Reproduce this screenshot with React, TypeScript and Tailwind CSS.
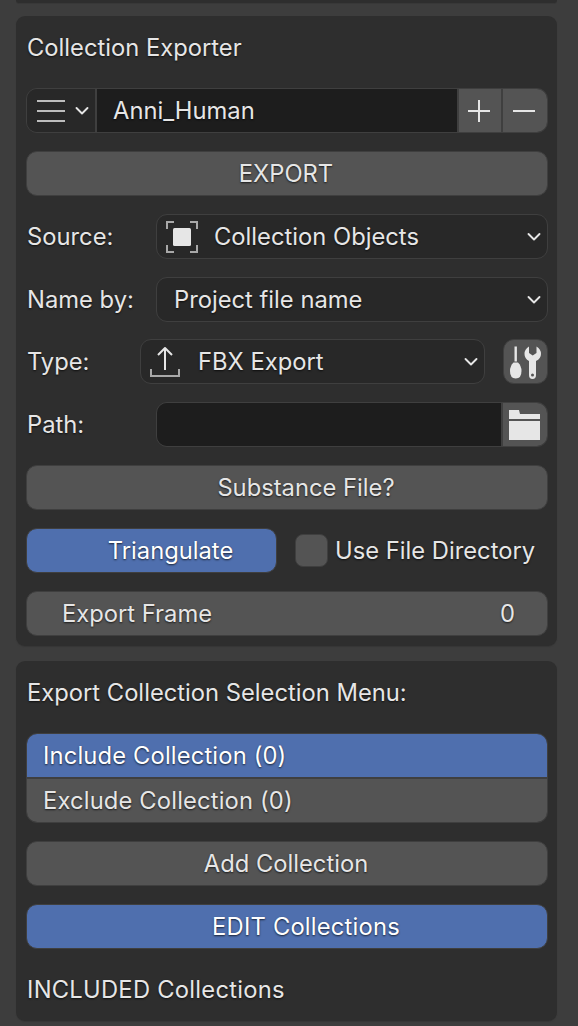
import React from "react";

const shadow = "[text-shadow:0_1px_2px_rgba(0,0,0,0.7)]";
const widgetBorder = "border border-[#3f3f3f]";

function Chevron({ className }: { className?: string }) {
  return (
    <svg viewBox="0 0 16 10" className={className} fill="none" stroke="#e6e6e6" strokeWidth="1.9" strokeLinecap="round" strokeLinejoin="round">
      <path d="M2.5 2 L8 7.5 L13.5 2" />
    </svg>
  );
}

function Label({ children, className = "" }: { children: React.ReactNode; className?: string }) {
  return <div className={`h-[45px] flex items-center pl-px shrink-0 text-[#e6e6e6] ${shadow} ${className}`}>{children}</div>;
}

function Button({ children, blue, iconGap }: { children: React.ReactNode; blue?: boolean; iconGap?: boolean }) {
  return (
    <div className={`h-[45px] rounded-[11px] flex items-center justify-center ${iconGap ? "pl-[38px]" : "pr-[2px]"} ${widgetBorder} ${shadow} ${blue ? "bg-[#4f6fae] text-white" : "bg-[#545454] text-[#e6e6e6]"}`}>
      {children}
    </div>
  );
}

function Dropdown({ icon, text, className = "" }: { icon?: React.ReactNode; text: string; className?: string }) {
  return (
    <div className={`h-[45px] rounded-[11px] bg-[#282828] flex items-center text-[#e6e6e6] ${widgetBorder} ${shadow} ${className}`}>
      {icon}
      <span className={icon ? "" : "pl-[17px]"}>{text}</span>
      <Chevron className="w-[16px] h-[10px] ml-auto mr-[5px]" />
    </div>
  );
}

export default function App() {
  return (
    <div className="w-[578px] h-[1026px] overflow-hidden bg-[#3d3d3d] text-[23.75px] leading-none pl-[16px] pr-[21px] font-['Inter',sans-serif]">
      <div className="h-[3px] bg-[#2e2e2e] rounded-b-[8px] shadow-[0_1px_0_#383838]" />
      <div className="mt-[13px] bg-[#2e2e2e] rounded-[9px] shadow-[0_1px_1px_#363636] pl-[10px] pr-[9px] pt-[9px] pb-[10px] flex flex-col gap-[18px]">
        <Label>Collection Exporter</Label>

        <div className={`h-[45px] rounded-[11px] flex overflow-hidden ${widgetBorder}`}>
          <div className="w-[70px] bg-[#282828] flex items-center pl-[10px] gap-[9px] border-r-2 border-[#3f3f3f] shrink-0">
            <svg viewBox="0 0 28 24" className="w-[28px] h-[24px] shrink-0" stroke="#bdbdbd" strokeWidth="2.2">
              <path d="M0 2 H28 M0 12 H28 M0 22 H28" />
            </svg>
            <Chevron className="w-[16px] h-[10px] shrink-0" />
          </div>
          <div className={`flex-1 bg-[#1d1d1d] flex items-center pl-[16px] text-[#e6e6e6] ${shadow}`}>Anni_Human</div>
          <div className="w-[44px] bg-[#545454] border-l-2 border-[#3f3f3f] flex items-center justify-center shrink-0">
            <svg viewBox="0 0 22 22" className="w-[22px] h-[22px] mr-[2px]" stroke="#e6e6e6" strokeWidth="2">
              <path d="M0 11 H22 M11 0 V22" />
            </svg>
          </div>
          <div className="w-[46px] bg-[#545454] border-l-2 border-[#3f3f3f] flex items-center justify-center shrink-0">
            <svg viewBox="0 0 22 4" className="w-[22px] h-[4px] mr-[2px]" stroke="#e6e6e6" strokeWidth="2">
              <path d="M0 2 H22" />
            </svg>
          </div>
        </div>

        <Button>EXPORT</Button>

        <div className="flex">
          <Label className="w-[130px]">Source:</Label>
          <Dropdown
            className="flex-1"
            text="Collection Objects"
            icon={
              <svg viewBox="0 0 32 32" className="w-[32px] h-[32px] ml-[9px] mr-[16px] shrink-0" fill="none">
                <path d="M1 8 V1 H8 M24 1 H31 V8 M1 24 V31 H8 M24 31 H31 V24" stroke="#a8a8a8" strokeWidth="2" />
                <rect x="7" y="7" width="18" height="18" rx="1.5" fill="#e6e6e6" />
              </svg>
            }
          />
        </div>

        <div className="flex">
          <Label className="w-[130px]">Name by:</Label>
          <Dropdown className="flex-1" text="Project file name" />
        </div>

        <div className="flex -mt-px">
          <Label className="w-[114px]">Type:</Label>
          <Dropdown
            className="flex-1"
            text="FBX Export"
            icon={
              <svg viewBox="0 0 30 32" className="w-[30px] h-[32px] ml-[9px] mr-[18px] shrink-0" fill="none">
                <path d="M15 24 V2 M8 9 L15 2 L22 9" stroke="#e6e6e6" strokeWidth="2" strokeLinejoin="round" />
                <path d="M1 23 V30 H29 V23" stroke="#a8a8a8" strokeWidth="2" />
              </svg>
            }
          />
          <div className={`w-[45px] h-[45px] ml-[18px] rounded-[11px] bg-[#545454] flex items-center justify-center shrink-0 ${widgetBorder}`}>
            <svg viewBox="0 0 32 34" className="w-[32px] h-[34px]" fill="#e6e6e6">
              <rect x="4.5" y="1.5" width="2.4" height="15" />
              <path d="M3.5 17.5 H8 Q11.5 21 11.5 26 Q11.5 33.5 5.7 33.5 Q0 33.5 0 26 Q0 21 3.5 17.5 Z" />
              <path
                fillRule="evenodd"
                d="M19 1.5 Q14.5 4 14.5 9 Q14.5 13.5 19 16 V30 Q19 34 22.5 34 Q26 34 26 30 V16 Q31 13.5 31 9 Q31 4 26.5 1.5 V8 L22.7 10.5 L19 8 Z M22.5 28.5 A1.5 1.5 0 1 0 22.5 31.5 A1.5 1.5 0 1 0 22.5 28.5 Z"
              />
            </svg>
          </div>
        </div>

        <div className="flex">
          <Label className="w-[130px]">Path:</Label>
          <div className={`flex-1 h-[45px] rounded-[11px] flex overflow-hidden ${widgetBorder}`}>
            <div className="flex-1 bg-[#1d1d1d]" />
            <div className="w-[46px] bg-[#545454] border-l-2 border-[#3f3f3f] flex items-center justify-center shrink-0">
              <svg viewBox="0 0 32 30" className="w-[32px] h-[30px] mr-[2px]" fill="#e6e6e6">
                <path d="M1 0 H11 L12 4 H32 V9 H1 Z" />
                <rect x="1" y="11" width="31" height="19" />
              </svg>
            </div>
          </div>
        </div>

        <Button iconGap>Substance File?</Button>

        <div className="flex items-center">
          <div className="w-[251px] shrink-0">
            <Button blue iconGap>Triangulate</Button>
          </div>
          <div className={`w-[33px] h-[33px] ml-[18px] rounded-[8px] bg-[#545454] shrink-0 ${widgetBorder}`} />
          <span className={`ml-[7px] text-[#e6e6e6] whitespace-nowrap ${shadow}`}>Use File Directory</span>
        </div>

        <div className={`h-[45px] rounded-[11px] bg-[#545454] flex items-center justify-between pl-[35px] pr-[32px] text-[#e6e6e6] ${widgetBorder} ${shadow}`}>
          <span>Export Frame</span>
          <span>0</span>
        </div>
      </div>

      <div className="mt-[15px] bg-[#2e2e2e] rounded-[9px] shadow-[0_1px_1px_#363636] pl-[10px] pr-[9px] pt-[9px] pb-[9px] flex flex-col gap-[18px]">
        <Label>Export Collection Selection Menu:</Label>

        <div className={`h-[90px] rounded-[11px] flex flex-col overflow-hidden tracking-[0.15px] ${widgetBorder} ${shadow}`}>
          <div className="h-[43px] bg-[#4f6fae] text-white flex items-center pl-[16px]">Include Collection (0)</div>
          <div className="flex-1 bg-[#545454] text-[#e6e6e6] border-t-2 border-[#3f3f3f] flex items-center pl-[16px]">Exclude Collection (0)</div>
        </div>

        <Button>Add Collection</Button>
        <Button blue iconGap>
          <span className="tracking-[0.2px]">EDIT Collections</span>
        </Button>
        <Label className="tracking-[0.25px]">INCLUDED Collections</Label>
      </div>
    </div>
  );
}
